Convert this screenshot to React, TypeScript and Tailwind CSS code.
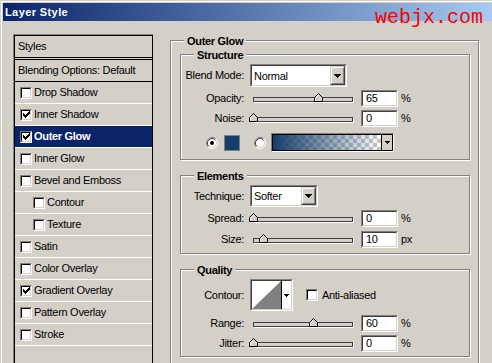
import React from "react";

const CHECK_PIXELS: [number, number][] = [
  [6, 0], [5, 1], [6, 1], [0, 2], [4, 2], [5, 2], [6, 2], [0, 3], [1, 3], [3, 3], [4, 3], [5, 3],
  [0, 4], [1, 4], [2, 4], [3, 4], [4, 4], [1, 5], [2, 5], [3, 5], [2, 6],
];
const CHECK_PATH = CHECK_PIXELS.map(([x, y]) => `M${x} ${y}h1v1h-1z`).join("");

function CheckMark() {
  return (
    <svg width="7" height="7" viewBox="0 0 7 7" className="block" shapeRendering="crispEdges">
      <path d={CHECK_PATH} fill="#000" />
    </svg>
  );
}

function CheckBox({ checked }: { checked?: boolean }) {
  return (
    <div className="w-[12px] h-[12px] shrink-0 border border-t-[#808080] border-l-[#808080] border-r-white border-b-white">
      <div className="w-full h-full border border-t-black border-l-black border-r-[#d4d0c8] border-b-[#d4d0c8] bg-white flex items-center justify-center">
        {checked && <CheckMark />}
      </div>
    </div>
  );
}

function TriDown({ small }: { small?: boolean }) {
  if (small) {
    return (
      <svg width="5" height="3" viewBox="0 0 5 3" className="block" shapeRendering="crispEdges">
        <path d="M0 0h5v1h-1v1h-1v1h-1v-1h-1v-1h-1z" fill="#000" />
      </svg>
    );
  }
  return (
    <svg width="7" height="4" viewBox="0 0 7 4" className="block" shapeRendering="crispEdges">
      <path d="M0 0h7v1h-1v1h-1v1h-1v1h-1v-1h-1v-1h-1v-1h-1z" fill="#000" />
    </svg>
  );
}

function Sunken({ className, children }: { className: string; children?: React.ReactNode }) {
  return (
    <div className={`shrink-0 border border-t-[#808080] border-l-[#808080] border-r-white border-b-white ${className}`}>
      <div className="h-full w-full border border-t-[#404040] border-l-[#404040] border-r-[#d4d0c8] border-b-[#d4d0c8] bg-white flex items-center">
        {children}
      </div>
    </div>
  );
}

function ArrowBtn() {
  return (
    <div className="h-full w-[15px] shrink-0 border border-t-[#d4d0c8] border-l-[#d4d0c8] border-r-[#404040] border-b-[#404040] bg-[#d4d0c8]">
      <div className="h-full w-full border border-t-white border-l-white border-r-[#808080] border-b-[#808080] flex items-center justify-center">
        <TriDown />
      </div>
    </div>
  );
}

function Dropdown({ text, className }: { text: string; className: string }) {
  return (
    <Sunken className={className}>
      <span className="flex-1 pl-[2px] pt-[1px]">{text}</span>
      <ArrowBtn />
    </Sunken>
  );
}

function Slider({ value }: { value: number }) {
  return (
    <div className="relative w-[110px] h-[17px] shrink-0 pl-[5px] pt-[7px]">
      <div className="w-[100px] h-[5px] border border-t-[#404040] border-l-[#404040] border-r-[#404040] border-b-[#404040] bg-[#d4d0c8] shadow-[1px_1px_0_#fff]" />
      <svg
        width="9"
        height="9"
        viewBox="0 0 9 9"
        className="absolute top-[3px] block"
        style={{ left: 5 + value - 4 }}
      >
        <polygon points="4.5,0.5 8.5,4.5 8.5,8.5 0.5,8.5 0.5,4.5" fill="#d4d0c8" stroke="#000" strokeWidth="1" />
        <path d="M1.5 7.5 V5 L4.5 2" stroke="#fff" strokeWidth="1" fill="none" />
      </svg>
    </div>
  );
}

function NumInput({ value }: { value: string }) {
  return (
    <Sunken className="w-[37px] h-[17px] ml-[3px]">
      <span className="pl-[3px]">{value}</span>
    </Sunken>
  );
}

function Radio({ checked }: { checked?: boolean }) {
  return (
    <svg width="12" height="12" viewBox="0 0 12 12" className="block shrink-0">
      <circle cx="6" cy="6" r="5" fill="#fff" />
      <path d="M2.11 9.89 A5.5 5.5 0 0 1 9.89 2.11" stroke="#808080" strokeWidth="1" fill="none" />
      <path d="M9.89 2.11 A5.5 5.5 0 0 1 2.11 9.89" stroke="#ffffff" strokeWidth="1" fill="none" />
      <path d="M2.82 9.18 A4.5 4.5 0 0 1 9.18 2.82" stroke="#404040" strokeWidth="1" fill="none" />
      <path d="M9.18 2.82 A4.5 4.5 0 0 1 2.82 9.18" stroke="#d4d0c8" strokeWidth="1" fill="none" />
      {checked && <circle cx="6" cy="6" r="2" fill="#000" />}
    </svg>
  );
}

function Row({ label, className, children }: { label: string; className: string; children?: React.ReactNode }) {
  return (
    <div className={`flex items-center ${className}`}>
      <div className="w-[63px] shrink-0 text-right whitespace-nowrap">{label}</div>
      {children}
    </div>
  );
}

function SliderRow({ label, value, unit, className }: { label: string; value: number; unit: string; className: string }) {
  return (
    <Row label={label} className={className}>
      <div className="ml-[4px]">
        <Slider value={value} />
      </div>
      <NumInput value={String(value)} />
      <span className="ml-[3px]">{unit}</span>
    </Row>
  );
}

function Legend({ text }: { text: string }) {
  return (
    <span className="absolute left-[13px] -top-[6px] px-[3px] bg-[#d4d0c8] font-bold leading-[13px] whitespace-nowrap">
      {text}
    </span>
  );
}

const GROUP = "relative w-[290px] border border-[#808080] shadow-[inset_1px_1px_0_#fff,1px_1px_0_#fff]";

export default function App() {
  const items: { label: string; checked?: boolean; selected?: boolean; indent?: boolean }[] = [
    { label: "Drop Shadow" },
    { label: "Inner Shadow", checked: true },
    { label: "Outer Glow", checked: true, selected: true },
    { label: "Inner Glow" },
    { label: "Bevel and Emboss" },
    { label: "Contour", indent: true },
    { label: "Texture", indent: true },
    { label: "Satin" },
    { label: "Color Overlay" },
    { label: "Gradient Overlay", checked: true },
    { label: "Pattern Overlay" },
    { label: "Stroke" },
  ];

  return (
    <div className="relative w-[492px] h-[363px] overflow-hidden bg-[#d4d0c8] pt-px pl-px font-['Liberation_Sans',Arial,sans-serif] text-[11px] text-black tracking-[-0.3px]">
      <div className="h-[400px] border-t border-l border-white">
        {/* Title bar */}
        <div className="mt-px ml-px h-[18px] flex items-center pl-[2px] bg-[linear-gradient(to_right,#0a246a,#a6caf0)] text-white font-bold text-[11px] tracking-[0.4px]">
          Layer Style
        </div>

        {/* Body */}
        <div className="flex items-start pl-[11px] pt-[13px]">
          {/* Styles list */}
          <div className="w-[140px] h-[340px] shrink-0 border-l border-t border-[#808080]">
            <div className="h-full border-l border-t border-r border-black">
              <div className="h-[22px] border-b border-black flex items-center pl-[3px]">Styles</div>
              <div className="mt-px h-[23px] border-t border-b border-black flex items-center pl-[3px]">
                Blending Options: Default
              </div>
              {items.map((it) => (
                <div
                  key={it.label}
                  className={`h-[22px] border-b border-white flex items-center ${it.indent ? "pl-[18px]" : "pl-[5px]"} ${
                    it.selected ? "bg-[#0a246a] text-white font-bold" : ""
                  }`}
                >
                  <CheckBox checked={it.checked} />
                  <span className="ml-[2px] whitespace-nowrap">{it.label}</span>
                </div>
              ))}
            </div>
          </div>

          {/* Right side */}
          <div className="ml-[17px] mt-[6px] relative w-[309px] h-[340px] shrink-0 border border-[#808080] shadow-[inset_1px_1px_0_#fff,1px_1px_0_#fff] pl-[9px] pt-[13px]">
            <Legend text="Outer Glow" />

            {/* Structure */}
            <div className={`${GROUP} pt-[9px] pb-[7px]`}>
              <Legend text="Structure" />
              <Row label="Blend Mode:" className="h-[23px]">
                <Dropdown text="Normal" className="ml-[6px] w-[97px] h-[23px]" />
              </Row>
              <SliderRow label="Opacity:" value={65} unit="%" className="h-[17px] mt-[3px]" />
              <SliderRow label="Noise:" value={0} unit="%" className="h-[17px] mt-[3px]" />
              <div className="flex items-center h-[19px] mt-[6px] pl-[25px]">
                <Radio checked />
                <div className="ml-[6px] w-[16px] h-[16px] shrink-0 border border-[#808080] bg-[#133e6b]" />
                <div className="ml-[14px]">
                  <Radio />
                </div>
                <div className="ml-[5px] w-[123px] h-[19px] shrink-0 border border-t-[#808080] border-l-[#808080] border-r-white border-b-white">
                  <div className="h-full w-full border border-black flex">
                    <div className="flex-1 h-full bg-[image:conic-gradient(#c8c8c8_25%,#ffffff_0_50%,#c8c8c8_0_75%,#ffffff_0)] bg-[length:8px_8px]">
                      <div className="h-full w-full bg-[image:linear-gradient(to_right,#133e6b,rgba(19,62,107,0))]" />
                    </div>
                    <div className="w-[11px] h-full border-l border-black bg-[#d4d0c8] flex items-center justify-center">
                      <TriDown small />
                    </div>
                  </div>
                </div>
              </div>
            </div>

            {/* Elements */}
            <div className={`${GROUP} mt-[15px] pt-[9px] pb-[5px]`}>
              <Legend text="Elements" />
              <Row label="Technique:" className="h-[22px]">
                <Dropdown text="Softer" className="ml-[6px] w-[68px] h-[22px]" />
              </Row>
              <SliderRow label="Spread:" value={0} unit="%" className="h-[17px] mt-[3px]" />
              <SliderRow label="Size:" value={10} unit="px" className="h-[17px] mt-[4px]" />
            </div>

            {/* Quality */}
            <div className={`${GROUP} mt-[15px] pt-[9px] pb-[4px]`}>
              <Legend text="Quality" />
              <Row label="Contour:" className="h-[32px]">
                <Sunken className="ml-[6px] w-[43px] h-[32px]">
                  <div className="flex h-full w-full">
                    <div className="flex-1 h-full">
                      <svg width="100%" height="100%" viewBox="0 0 28 26" preserveAspectRatio="none" className="block">
                        <polygon points="0,26 28,0 28,26" fill="#808080" />
                      </svg>
                    </div>
                    <div className="w-[10px] h-full border-l border-black flex items-center justify-center">
                      <TriDown small />
                    </div>
                  </div>
                </Sunken>
                <div className="ml-[13px]">
                  <CheckBox />
                </div>
                <span className="ml-[4px]">Anti-aliased</span>
              </Row>
              <SliderRow label="Range:" value={60} unit="%" className="h-[17px] mt-[4px]" />
              <SliderRow label="Jitter:" value={0} unit="%" className="h-[17px] mt-[3px]" />
            </div>
          </div>
        </div>
      </div>

      {/* watermark */}
      <div className="absolute left-[375px] top-[8px] font-['Liberation_Mono',monospace] text-[20px] leading-[20px] tracking-normal text-[#ff0000]">
        webjx.com
      </div>
    </div>
  );
}
